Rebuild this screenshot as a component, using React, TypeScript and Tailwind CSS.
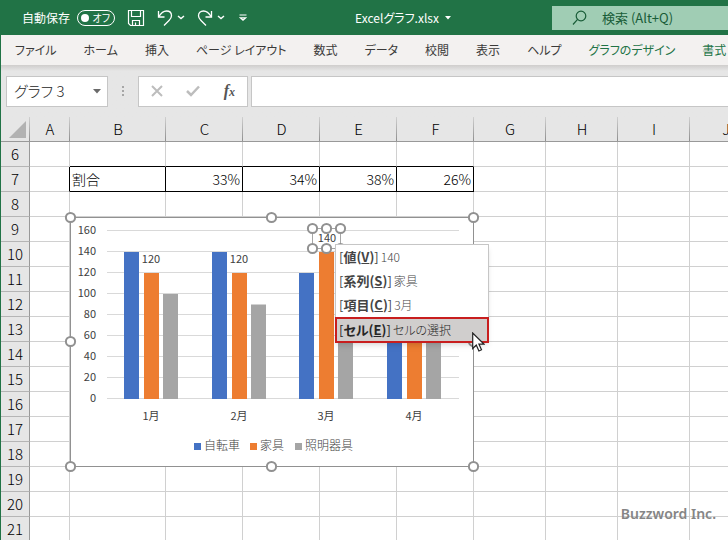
import React from "react";

const tabs = [
  "ファイル",
  "ホーム",
  "挿入",
  "ページ レイアウト",
  "数式",
  "データ",
  "校閲",
  "表示",
  "ヘルプ",
];
const chartTabs = ["グラフのデザイン", "書式"];

const columns = ["A", "B", "C", "D", "E", "F", "G", "H", "I", "J"];
const columnWidths = [
  "w-10",
  "w-24",
  "w-[77px]",
  "w-[77px]",
  "w-[77px]",
  "w-[77px]",
  "w-18",
  "w-18",
  "w-18",
  "w-18",
];
const rows = [6, 7, 8, 9, 10, 11, 12, 13, 14, 15, 16, 17, 18, 19, 20, 21];
const cells: Record<string, string> = {
  B7: "割合",
  C7: "33%",
  D7: "34%",
  E7: "38%",
  F7: "26%",
};

const series = [
  { name: "自転車", color: "#4472c4", x: 124, offset: 0 },
  { name: "家具", color: "#ed7d31", x: 180, offset: 20 },
  { name: "照明器具", color: "#a5a5a5", x: 225, offset: 39 },
];
const months = [
  { name: "1月", x: 54, values: [140, 120, 100] },
  { name: "2月", x: 142, values: [140, 120, 90] },
  { name: "3月", x: 229, values: [120, 140, 110] },
  { name: "4月", x: 317, values: [100, 90, 80] },
];
const axis = [160, 140, 120, 100, 80, 60, 40, 20, 0];

const menuItems = [
  { name: "値", shortcut: "V", value: "140" },
  { name: "系列", shortcut: "S", value: "家具" },
  { name: "項目", shortcut: "C", value: "3月" },
  { name: "セル", shortcut: "E", value: "セルの選択", active: true },
];

function ChevronSmall() {
  return (
    <svg width="8" height="5" viewBox="0 0 8 5" fill="none" stroke="currentColor" strokeWidth="1.4">
      <path d="M1 1l3 2.6L7 1" />
    </svg>
  );
}

function TitleBar() {
  return (
    <header className="flex h-[35px] shrink-0 items-center bg-[#217346] text-xs text-white">
      <div className="flex w-[254px] shrink-0 items-center pl-[22px]">
        <label className="flex items-center gap-[7px]">
          自動保存
          <input type="checkbox" role="switch" className="peer sr-only" />
          <span className="flex h-4 w-[38px] items-center justify-between rounded-full border border-white pr-1 pl-[3px] text-[10px]">
            <span className="size-2 rounded-full bg-white" />
            オフ
          </span>
        </label>
        <button aria-label="上書き保存" className="ml-3">
          <svg width="18" height="18" viewBox="0 0 18 18" fill="none" stroke="currentColor" strokeWidth="1.2">
            <path d="M1.5 1.5h15v15h-13l-2-2z" />
            <path d="M4.5 1.5v6h9v-6M5.5 16.5v-5h7v5M8.5 16v-2.500" />
          </svg>
        </button>
        <button aria-label="元に戻す" className="ml-3">
          <svg width="16" height="18" viewBox="0 0 16 18" fill="none" stroke="currentColor" strokeWidth="1.3">
            <path d="M1.500 2v6h6" />
            <path d="M1.800 7.700C4 4 6.500 2 9.500 2c3 0 5 2 5 4.700 0 2-1 3.300-2.500 4.800L7 16.500" />
          </svg>
        </button>
        <button aria-label="元に戻す一覧" className="ml-1">
          <ChevronSmall />
        </button>
        <button aria-label="やり直し" className="ml-3">
          <svg width="16" height="18" viewBox="0 0 16 18" fill="none" stroke="currentColor" strokeWidth="1.3">
            <path d="M14.500 2v6h-6" />
            <path d="M14.200 7.700C12 4 9.500 2 6.500 2c-3 0-5 2-5 4.700 0 2 1 3.300 2.500 4.800L9 16.500" />
          </svg>
        </button>
        <button aria-label="やり直し一覧" className="ml-1">
          <ChevronSmall />
        </button>
        <button aria-label="クイック アクセス ツール バーのユーザー設定" className="ml-3.5">
          <svg width="8" height="8" viewBox="0 0 8 8" fill="none" stroke="currentColor" strokeWidth="1.2">
            <path d="M0.500 1h7M1.300 3.800L4 6.300l2.700-2.500z" />
          </svg>
        </button>
      </div>
      <div className="flex flex-1 items-center justify-center gap-1.5">
        <h1>Excelグラフ.xlsx</h1>
        <svg width="6" height="4" viewBox="0 0 6 4" fill="currentColor">
          <path d="M0 0h6L3 3.500z" />
        </svg>
      </div>
      <label className="flex h-6 w-44 shrink-0 items-center gap-[15px] bg-[#a0cdb4] pl-5 text-[13px] text-[#185c37]">
        <svg width="15" height="16" viewBox="0 0 15 16" fill="none" stroke="currentColor" strokeWidth="1.2" className="shrink-0">
          <circle cx="9" cy="6" r="4.800" />
          <path d="M5.600 9.400L1 14.500" />
        </svg>
        <input
          type="search"
          aria-label="検索"
          placeholder="検索 (Alt+Q)"
          className="w-full min-w-0 outline-none placeholder:text-[#185c37]"
        />
      </label>
    </header>
  );
}

function Ribbon() {
  return (
    <nav className="flex h-[30px] shrink-0 items-center gap-[27px] overflow-hidden border-l border-[#217346] bg-[#f3f1f0] pl-3.5 text-xs whitespace-nowrap text-[#3b3a39]">
      {tabs.map((tab) => (
        <button key={tab}>{tab}</button>
      ))}
      {chartTabs.map((tab) => (
        <button key={tab} className="text-[#217346]">
          {tab}
        </button>
      ))}
    </nav>
  );
}

function FormulaBar() {
  return (
    <div className="flex h-[52px] shrink-0 items-center border-l border-[#217346] bg-[#e6e6e6] bg-linear-to-b from-[#cfcdcc] to-[#e6e6e6] to-[6px] pl-[5px]">
      <div className="flex h-[31px] w-[102px] shrink-0 items-center border border-[#c6c6c6] bg-white pr-1.5 pl-[7px]">
        <input
          aria-label="名前ボックス"
          defaultValue="グラフ 3"
          className="w-full min-w-0 text-[15px] font-light text-[#262626] outline-none"
        />
        <button aria-label="名前の一覧">
          <svg width="8" height="5" viewBox="0 0 8 5" fill="#6a6a6a">
            <path d="M0 0h8L4 4.500z" />
          </svg>
        </button>
      </div>
      <svg width="30" height="12" viewBox="0 0 30 12" fill="#a6a6a6" className="shrink-0">
        <path d="M14 1h2v2h-2zM14 5h2v2h-2zM14 9h2v2h-2z" />
      </svg>
      <div className="flex h-[31px] w-[110px] shrink-0 items-center justify-between border border-[#c6c6c6] bg-white px-3">
        <button aria-label="キャンセル">
          <svg width="12" height="12" viewBox="0 0 12 12" stroke="#bdbdbd" strokeWidth="2">
            <path d="M1 1l10 10M11 1L1 11" />
          </svg>
        </button>
        <button aria-label="入力">
          <svg width="14" height="12" viewBox="0 0 14 12" fill="none" stroke="#bdbdbd" strokeWidth="2.500">
            <path d="M1 6l4 4L13 1.500" />
          </svg>
        </button>
        <button
          aria-label="関数の挿入"
          className="font-['Liberation_Serif',serif] text-base leading-4 font-bold text-[#555] italic"
        >
          f<span className="text-xs">x</span>
        </button>
      </div>
      <input
        aria-label="数式バー"
        className="ml-[3px] h-[31px] min-w-0 flex-1 border border-r-0 border-[#c6c6c6] bg-white outline-none"
      />
    </div>
  );
}

function cellBorder(col: string, row: number) {
  const inTable = "BCDEF".includes(col);
  const bottom = inTable && (row === 6 || row === 7) ? "border-b-black" : "border-b-[#d0d0d0]";
  const right = row === 7 && (inTable || col === "A") ? "border-r-black" : "border-r-[#d0d0d0]";
  return `${bottom} ${right}`;
}

function Grid() {
  return (
    <table className="w-full min-w-[761px] table-fixed border-separate border-spacing-0 border-l border-[#217346] font-light text-black">
      <thead>
        <tr className="h-[25px] bg-[#e6e6e6] text-[15px] leading-6">
          <th className="w-[29px] border-b border-[#999] bg-[linear-gradient(to_bottom,#d0d0d0,#8f8f8f)] bg-[length:1px_100%] bg-right bg-no-repeat p-0">
            <svg width="17" height="17" viewBox="0 0 17 17" fill="#b2b2b2" className="ml-2">
              <path d="M17 0v17H0z" />
            </svg>
          </th>
          {columns.map((col, i) => (
            <th
              key={col}
              scope="col"
              className={`border-b border-[#999] bg-[linear-gradient(to_bottom,#d0d0d0,#8f8f8f)] bg-[length:1px_100%] bg-right bg-no-repeat p-0 font-light ${columnWidths[i]}`}
            >
              {col}
            </th>
          ))}
        </tr>
      </thead>
      <tbody>
        {rows.map((row) => (
          <tr key={row} className="h-[25px]">
            <th
              scope="row"
              className="border-r border-b border-r-[#999] border-b-[#b5b5b5] bg-[#e6e6e6] p-0 text-[15px] leading-6 font-light"
            >
              {row}
            </th>
            {columns.map((col) => (
              <td
                key={col}
                className={`border-r border-b px-0.5 py-0 text-sm leading-6 ${
                  col === "B" ? "text-left" : "text-right"
                } ${cellBorder(col, row)}`}
              >
                {cells[`${col}${row}`]}
              </td>
            ))}
          </tr>
        ))}
      </tbody>
    </table>
  );
}

function Handle({ x, y }: { x: number; y: number }) {
  return <circle cx={x} cy={y} r="4.600" fill="#fff" stroke="#919191" strokeWidth="2" />;
}

function Chart() {
  return (
    <svg
      width="404"
      height="250"
      viewBox="0 0 404 250"
      className="absolute top-[100px] left-[70px] overflow-visible text-[11px]"
      fill="#404040"
      role="img"
      aria-label="月別売上グラフ"
    >
      <rect x="0.500" y="0.500" width="403" height="249" fill="#fff" stroke="#919191" />
      {axis.map((value, i) => (
        <g key={value}>
          <path d={`M37 ${13.5 + i * 21}H389`} stroke="#d9d9d9" />
          <text x="26" y={17 + i * 21} textAnchor="end">
            {value}
          </text>
        </g>
      ))}
      {months.map((month) => (
        <g key={month.name}>
          {series.map((s, i) => (
            <rect
              key={s.name}
              x={month.x + s.offset}
              y={182 - month.values[i] * 1.05}
              width="15"
              height={month.values[i] * 1.05}
              fill={s.color}
            />
          ))}
          <text x={month.x + 27} y="203" textAnchor="middle">
            {month.name}
          </text>
        </g>
      ))}
      <text x="81" y="46" textAnchor="middle">120</text>
      <text x="169" y="46" textAnchor="middle">120</text>

      {/* selected data label */}
      <rect x="242.500" y="11.500" width="28" height="20" fill="#fff" stroke="#a6a6a6" />
      {[242.5, 256.5, 270.5].map((x) => (
        <g key={x}>
          <Handle x={x} y={11.5} />
          <Handle x={x} y={31.5} />
        </g>
      ))}
      <text x="257" y="25" textAnchor="middle">140</text>

      {/* legend */}
      {series.map((s) => (
        <g key={s.name} className="text-xs font-light">
          <rect x={s.x} y="226" width="7" height="7" fill={s.color} />
          <text x={s.x + 10} y="233">
            {s.name}
          </text>
        </g>
      ))}

      {[0.5, 201.5, 403.5].map((x) => (
        <g key={x}>
          <Handle x={x} y={0.5} />
          <Handle x={x} y={249.5} />
        </g>
      ))}
      <Handle x={0.5} y={124.5} />
      <Handle x={403.5} y={124.5} />
    </svg>
  );
}

function LabelMenu() {
  return (
    <div
      role="menu"
      className="absolute top-[127px] left-[335px] flex w-[154px] flex-col border border-[#c6c6c6] bg-white text-xs text-[#444] shadow-md"
    >
      {menuItems.map((item) => (
        <button
          key={item.name}
          role="menuitem"
          className={`flex items-center gap-0.5 text-left whitespace-nowrap ${
            item.active
              ? "-mx-px -mb-px h-[26px] border-2 border-[#c81e1e] bg-[#d0cecd] pl-0.5 text-[#262626]"
              : "h-6 pl-[3px]"
          }`}
        >
          <span className="text-[13px]">
            [
            <b>
              {item.name}(<u>{item.shortcut}</u>)
            </b>
            ]
          </span>
          <span className="font-light">{item.value}</span>
        </button>
      ))}
    </div>
  );
}

function Pointer() {
  return (
    <svg width="13" height="20" viewBox="0 0 13 20" className="absolute top-[215px] left-[472px]">
      <path d="M0.700 1v15.500l3.600-3.400 2.600 5.900 2.600-1.200-2.600-5.700h5z" fill="#fff" stroke="#222" strokeWidth="1.200" />
    </svg>
  );
}

export default function App() {
  return (
    <div className="flex h-screen flex-col overflow-hidden bg-white font-['Noto_Sans_CJK_JP',sans-serif] [font-feature-settings:'palt']">
      <TitleBar />
      <Ribbon />
      <FormulaBar />
      <main className="relative min-h-0 flex-1 overflow-hidden">
        <Grid />
        <Chart />
        <LabelMenu />
        <Pointer />
        <p className="absolute right-3 bottom-4 font-['Noto_Sans',sans-serif] text-sm leading-5 font-semibold text-[#858585]">
          Buzzword Inc.
        </p>
      </main>
    </div>
  );
}
